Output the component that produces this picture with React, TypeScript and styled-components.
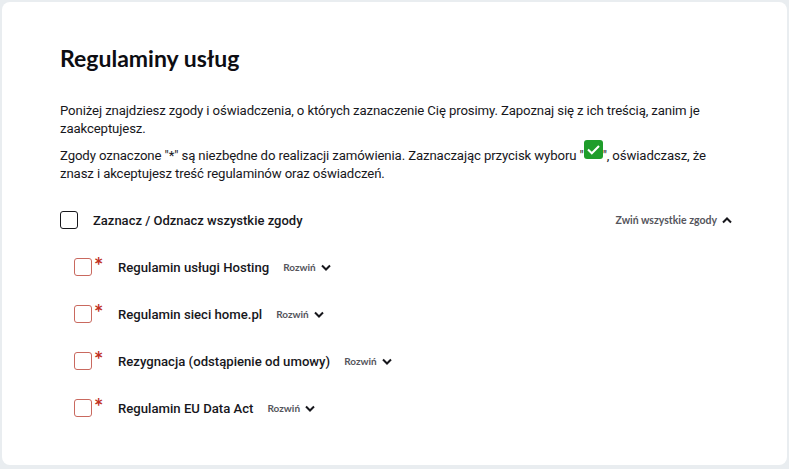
import React from 'react';
import styled, { createGlobalStyle } from 'styled-components';

const GlobalStyle = createGlobalStyle`
  html, body {
    margin: 0;
    padding: 0;
    background: #e9edf0;
  }
  body {
    font-family: Roboto, "Liberation Sans", sans-serif;
    color: #111;
  }
`;

const Page = styled.div`
  box-sizing: border-box;
  width: 789px;
  height: 469px;
  padding: 2px 2px 4px 2px;
`;

const Card = styled.main`
  box-sizing: border-box;
  height: 100%;
  background: #fff;
  border-radius: 8px;
  padding: 41px 55px 0 58px;
`;

const Title = styled.h1`
  margin: 0 0 29px;
  font-family: Lato, sans-serif;
  font-size: 23px;
  line-height: 30px;
  font-weight: 700;
  color: #0d0d12;
`;

const Paragraph = styled.p`
  margin: 0 0 9px;
  font-size: 13.2px;
  letter-spacing: -0.12px;
  line-height: 18px;
  color: #17171c;
`;

const CheckSample = styled.svg`
  width: 19px;
  height: 19px;
  margin-top: -8px;
  vertical-align: 1px;
`;

const MasterRow = styled.div`
  display: flex;
  align-items: center;
  margin-top: 27px;
  height: 20px;
`;

const Box = styled.span<{ $required?: boolean }>`
  box-sizing: border-box;
  flex: none;
  width: 18px;
  height: 18px;
  background: #fff;
  border-radius: 3px;
  border: 1px solid ${(p) => (p.$required ? '#c9695f' : '#17171c')};
`;

const MasterLabel = styled.span`
  margin-left: 15px;
  font-size: 13px;
  font-weight: 500;
  color: #17171c;
`;

const CollapseAll = styled.button`
  display: flex;
  align-items: center;
  gap: 5px;
  margin-left: auto;
  padding: 0;
  border: 0;
  background: none;
  font-family: Lato, sans-serif;
  font-size: 10.5px;
  font-weight: 700;
  color: #55555c;
`;

const List = styled.ul`
  list-style: none;
  margin: 28px 0 0;
  padding: 0 0 0 14px;
  display: flex;
  flex-direction: column;
  gap: 29px;
`;

const Row = styled.li`
  display: flex;
  align-items: center;
  height: 18px;
`;

const Star = styled.span`
  width: 24px;
  margin-left: 2px;
  align-self: flex-start;
  font-family: Lato, sans-serif;
  font-size: 22px;
  line-height: 15px;
  font-weight: 700;
  color: #c0301f;
`;

const RowLabel = styled.span`
  font-size: 13.15px;
  font-weight: 500;
  color: #17171c;
`;

const Expand = styled.button`
  display: flex;
  align-items: center;
  gap: 5px;
  margin-left: 14px;
  padding: 0;
  border: 0;
  background: none;
  font-family: Lato, sans-serif;
  font-size: 10px;
  font-weight: 700;
  color: #55555c;
`;

const Chevron = ({ up }: { up?: boolean }) => (
  <svg width="10" height="7" viewBox="0 0 10 7" fill="none">
    <path
      d={up ? 'M1 5.5 5 1.5l4 4' : 'M1 1.5l4 4 4-4'}
      stroke="#17171c"
      strokeWidth="2"
    />
  </svg>
);

const consents = [
  'Regulamin usługi Hosting',
  'Regulamin sieci home.pl',
  'Rezygnacja (odstąpienie od umowy)',
  'Regulamin EU Data Act',
];

export default function App() {
  return (
    <Page>
      <GlobalStyle />
      <Card>
        <Title>Regulaminy usług</Title>
        <Paragraph>
          Poniżej znajdziesz zgody i oświadczenia, o których zaznaczenie Cię prosimy. Zapoznaj się z
          ich treścią, zanim je zaakceptujesz.
        </Paragraph>
        <Paragraph>
          Zgody oznaczone "*" są niezbędne do realizacji zamówienia. Zaznaczając przycisk wyboru "
          <CheckSample viewBox="0 0 19 19">
            <rect width="19" height="19" rx="3" fill="#1f9d2b" />
            <path d="M4 9.5l3.8 3.8L15 6" fill="none" stroke="#fff" strokeWidth="2" />
          </CheckSample>
          ", oświadczasz, że znasz i akceptujesz treść regulaminów oraz oświadczeń.
        </Paragraph>
        <MasterRow>
          <Box />
          <MasterLabel>Zaznacz / Odznacz wszystkie zgody</MasterLabel>
          <CollapseAll>
            Zwiń wszystkie zgody <Chevron up />
          </CollapseAll>
        </MasterRow>
        <List>
          {consents.map((label) => (
            <Row key={label}>
              <Box $required />
              <Star>*</Star>
              <RowLabel>{label}</RowLabel>
              <Expand>
                Rozwiń <Chevron />
              </Expand>
            </Row>
          ))}
        </List>
      </Card>
    </Page>
  );
}
